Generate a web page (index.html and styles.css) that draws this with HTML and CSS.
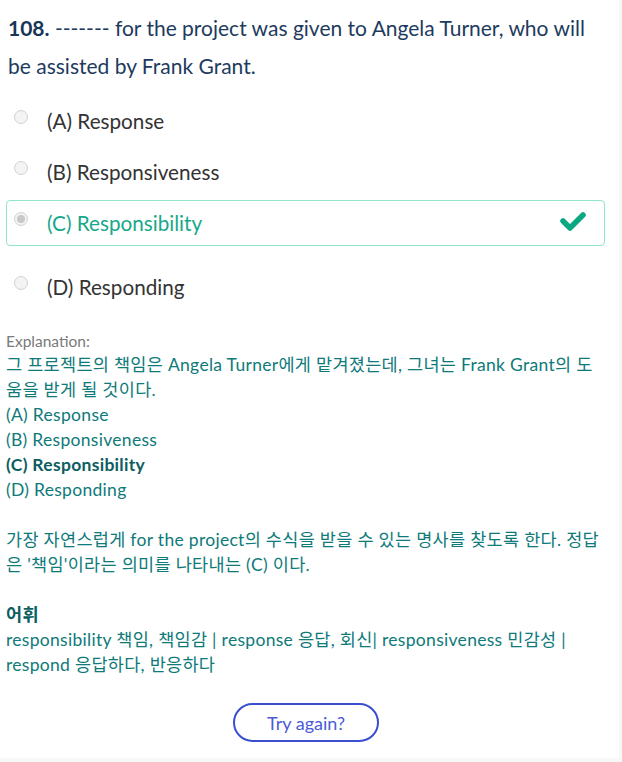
FILE: index.html
```html
<!DOCTYPE html>
<html lang="ko">
<head>
<meta charset="utf-8">
<link rel="stylesheet" href="styles.css">
</head>
<body>
<div class="page">
  <p class="question"><b class="qnum">108.</b> ------- for the project was given to Angela Turner, who will be assisted by Frank Grant.</p>
  <div class="options">
    <div class="option"><span class="radio"></span><span class="label">(A) Response</span></div>
    <div class="option"><span class="radio"></span><span class="label">(B) Responsiveness</span></div>
    <div class="option correct"><span class="radio checked"></span><span class="label">(C) Responsibility</span>
      <svg class="check" width="26" height="20" viewBox="0 0 26 20"><path d="M3 10 L10 17 L23 4" fill="none" stroke="#0aa882" stroke-width="5.5" stroke-linecap="round" stroke-linejoin="round"/></svg>
    </div>
    <div class="option last"><span class="radio"></span><span class="label">(D) Responding</span></div>
  </div>
  <div class="explanation">
    <div class="exp-title">Explanation:</div>
    <div class="exp-body">그 프로젝트의 책임은 Angela Turner에게 맡겨졌는데, 그녀는 Frank Grant의 도<br>움을 받게 될 것이다.<br>(A) Response<br>(B) Responsiveness<br><b>(C) Responsibility</b><br>(D) Responding<br><br>가장 자연스럽게 for the project의 수식을 받을 수 있는 명사를 찾도록 한다. 정답<br>은 '책임'이라는 의미를 나타내는 (C) 이다.<br><br><b>어휘</b><br>responsibility 책임, 책임감 | response 응답, 회신| responsiveness 민감성 |<br>respond 응답하다, 반응하다</div>
  </div>
  <div class="actions"><button class="retry" type="button">Try again?</button></div>
</div>
</body>
</html>
```
FILE: styles.css
```css
html, body {
  margin: 0;
  padding: 0;
  background: #f7f7f7;
}
body {
  font-family: "Lato", "Noto Sans CJK KR", sans-serif;
}
.page {
  width: 619px;
  min-height: 758px;
  background: #fff;
  box-sizing: border-box;
  padding: 9px 10px 0 6px;
}
.question {
  margin: 0;
  padding: 0 8px 0 2px;
  font-size: 21px;
  line-height: 38px;
  color: #1d3b5e;
}
.qnum {
  font-weight: 700;
  color: #173659;
}
.options {
  margin-top: 13px;
  margin-right: 4px;
}
.option {
  display: flex;
  align-items: center;
  height: 46px;
  margin-bottom: 5px;
  box-sizing: border-box;
  padding-left: 7px;
  border: 1px solid transparent;
  border-radius: 4px;
  font-size: 20.7px;
  color: #333;
}
.option.correct {
  border-color: #8fe6c8;
  color: #17a88a;
  margin-bottom: 18px;
}
.option.last {
  margin-bottom: 0;
}
.radio {
  width: 14px;
  height: 14px;
  border-radius: 50%;
  border: 1px solid #d2d2d2;
  background: #f4f4f4;
  box-sizing: border-box;
  margin-right: 19px;
  margin-top: -8px;
  flex: none;
  position: relative;
}
.radio.checked::after {
  content: "";
  position: absolute;
  left: 2px;
  top: 2px;
  width: 8px;
  height: 8px;
  border-radius: 50%;
  background: #c8c8c8;
}
.check {
  margin-left: auto;
  margin-right: 18px;
  margin-top: -5px;
}
.explanation {
  margin-top: 21px;
}
.exp-title {
  font-size: 15.5px;
  line-height: 21px;
  color: #7a7a7a;
}
.exp-body {
  font-size: 17.5px;
  letter-spacing: 0.3px;
  line-height: 25px;
  color: #0e7a7a;
  white-space: nowrap;
}
.exp-body b {
  color: #0c5e62;
}
.actions {
  display: flex;
  justify-content: center;
  margin-top: 26px;
}
.retry {
  width: 146px;
  height: 39px;
  border: 2px solid #3a4ed0;
  border-radius: 20px;
  background: #fff;
  color: #4b5bd6;
  font-family: "Lato", sans-serif;
  font-size: 18px;
  margin-right: 3px;
}
```
